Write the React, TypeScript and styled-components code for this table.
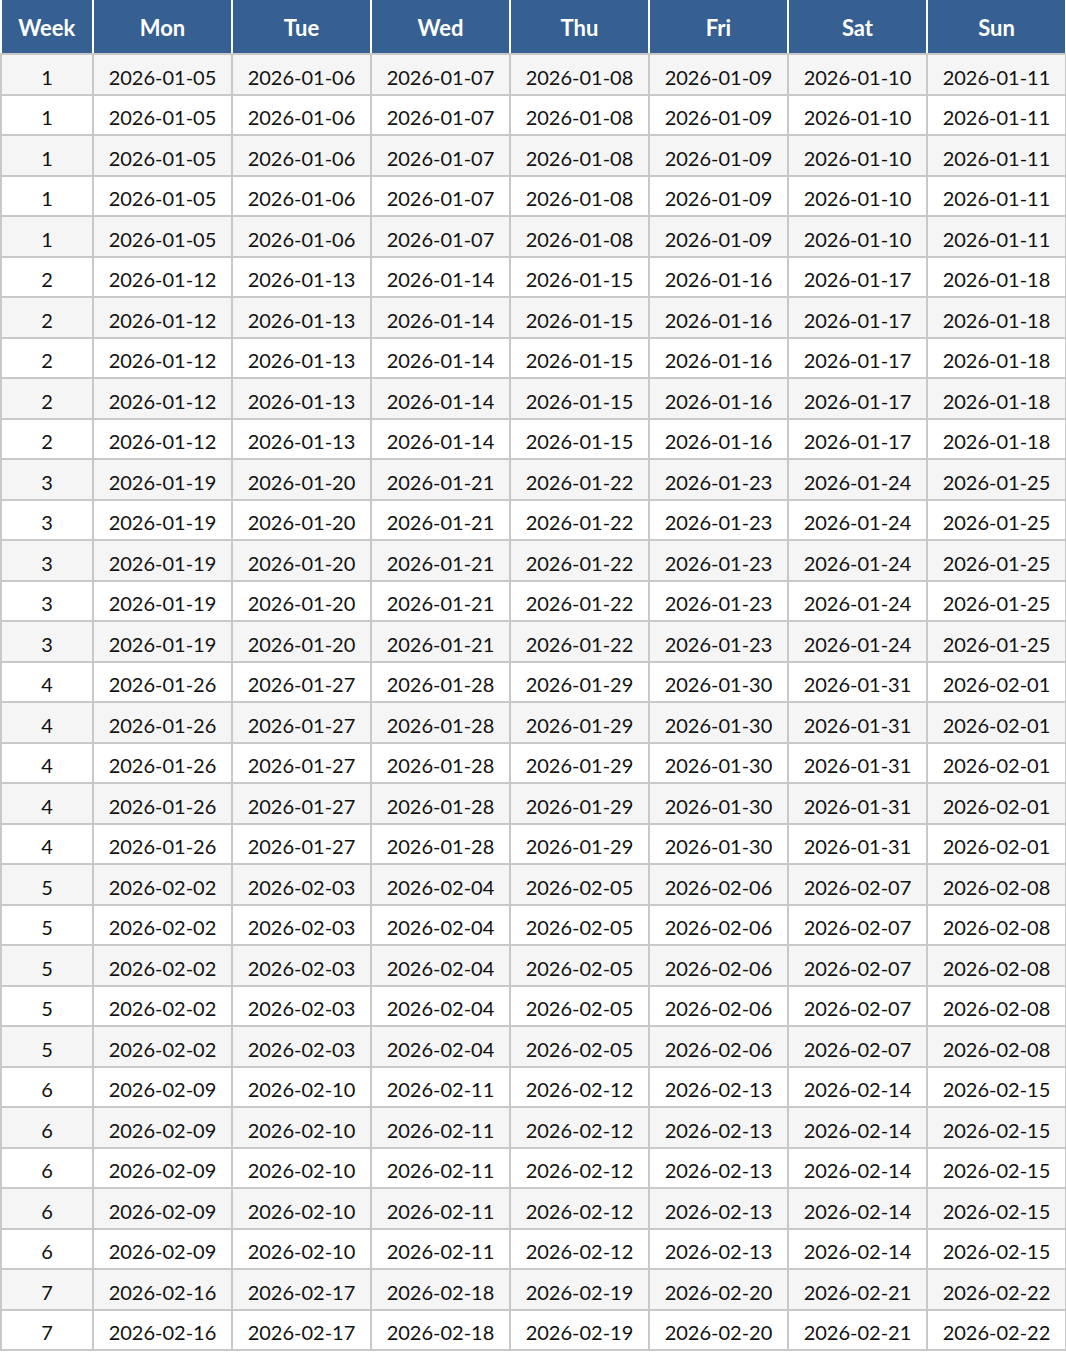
import React from 'react';
import styled, { createGlobalStyle } from 'styled-components';

const GlobalStyle = createGlobalStyle`
    html, body {
        margin: 0;
        padding: 0;
        background: #ffffff;
    }
    body {
        font-family: Lato, 'Liberation Sans', sans-serif;
    }
`;

const DAYS = ['Mon', 'Tue', 'Wed', 'Thu', 'Fri', 'Sat', 'Sun'];

const pad = (n: number) => String(n).padStart(2, '0');

const fmt = (d: Date) =>
    `${d.getUTCFullYear()}-${pad(d.getUTCMonth() + 1)}-${pad(d.getUTCDate())}`;

// 7 weeks, each repeated 5 times (last week cut off after 2 rows)
const buildRows = () => {
    const rows: { week: number; dates: string[] }[] = [];
    const start = Date.UTC(2026, 0, 5);
    for (let w = 0; w < 7; w++) {
        const dates = DAYS.map((_, i) => fmt(new Date(start + (w * 7 + i) * 86400000)));
        const repeat = w === 6 ? 2 : 5;
        for (let r = 0; r < repeat; r++) {
            rows.push({ week: w + 1, dates });
        }
    }
    return rows;
};

const App = () => {
    const rows = React.useMemo(buildRows, []);

    return (
        <>
            <GlobalStyle />
            <Page>
                <Table>
                    <colgroup>
                        <col style={{ width: 92 }} />
                        {DAYS.map((d) => (
                            <col key={d} style={{ width: 139 }} />
                        ))}
                    </colgroup>
                    <thead>
                        <tr>
                            <HeadCell>Week</HeadCell>
                            {DAYS.map((d) => (
                                <HeadCell key={d}>{d}</HeadCell>
                            ))}
                        </tr>
                    </thead>
                    <tbody>
                        {rows.map((row, i) => (
                            <Row key={i} striped={i % 2 === 0}>
                                <Cell>{row.week}</Cell>
                                {row.dates.map((d, j) => (
                                    <Cell key={j}>{d}</Cell>
                                ))}
                            </Row>
                        ))}
                    </tbody>
                </Table>
            </Page>
        </>
    );
};

const Page = styled.div`
    width: 1066px;
`;

const Table = styled.table`
    width: 1062px;
    table-layout: fixed;
    border-collapse: collapse;
`;

const HeadCell = styled.th`
    height: 54px;
    padding: 2px 0 0;
    box-sizing: border-box;
    background-color: #366092;
    color: #ffffff;
    font-size: 22px;
    font-weight: 700;
    text-align: center;
    border: 2px solid #ffffff;
    border-top: 0;
    border-bottom: 2px solid #c8c8c8;
    &:first-child {
        border-left: 1px solid #ffffff;
    }
`;

const Row = styled.tr<{ striped: boolean }>`
    background-color: ${({ striped }) => (striped ? '#f5f5f5' : '#ffffff')};
`;

const Cell = styled.td`
    height: 40.5px;
    padding: 5px 0 0;
    box-sizing: border-box;
    font-size: 20px;
    color: #111111;
    text-align: center;
    border: 2px solid #c8c8c8;
`;

export default App;
